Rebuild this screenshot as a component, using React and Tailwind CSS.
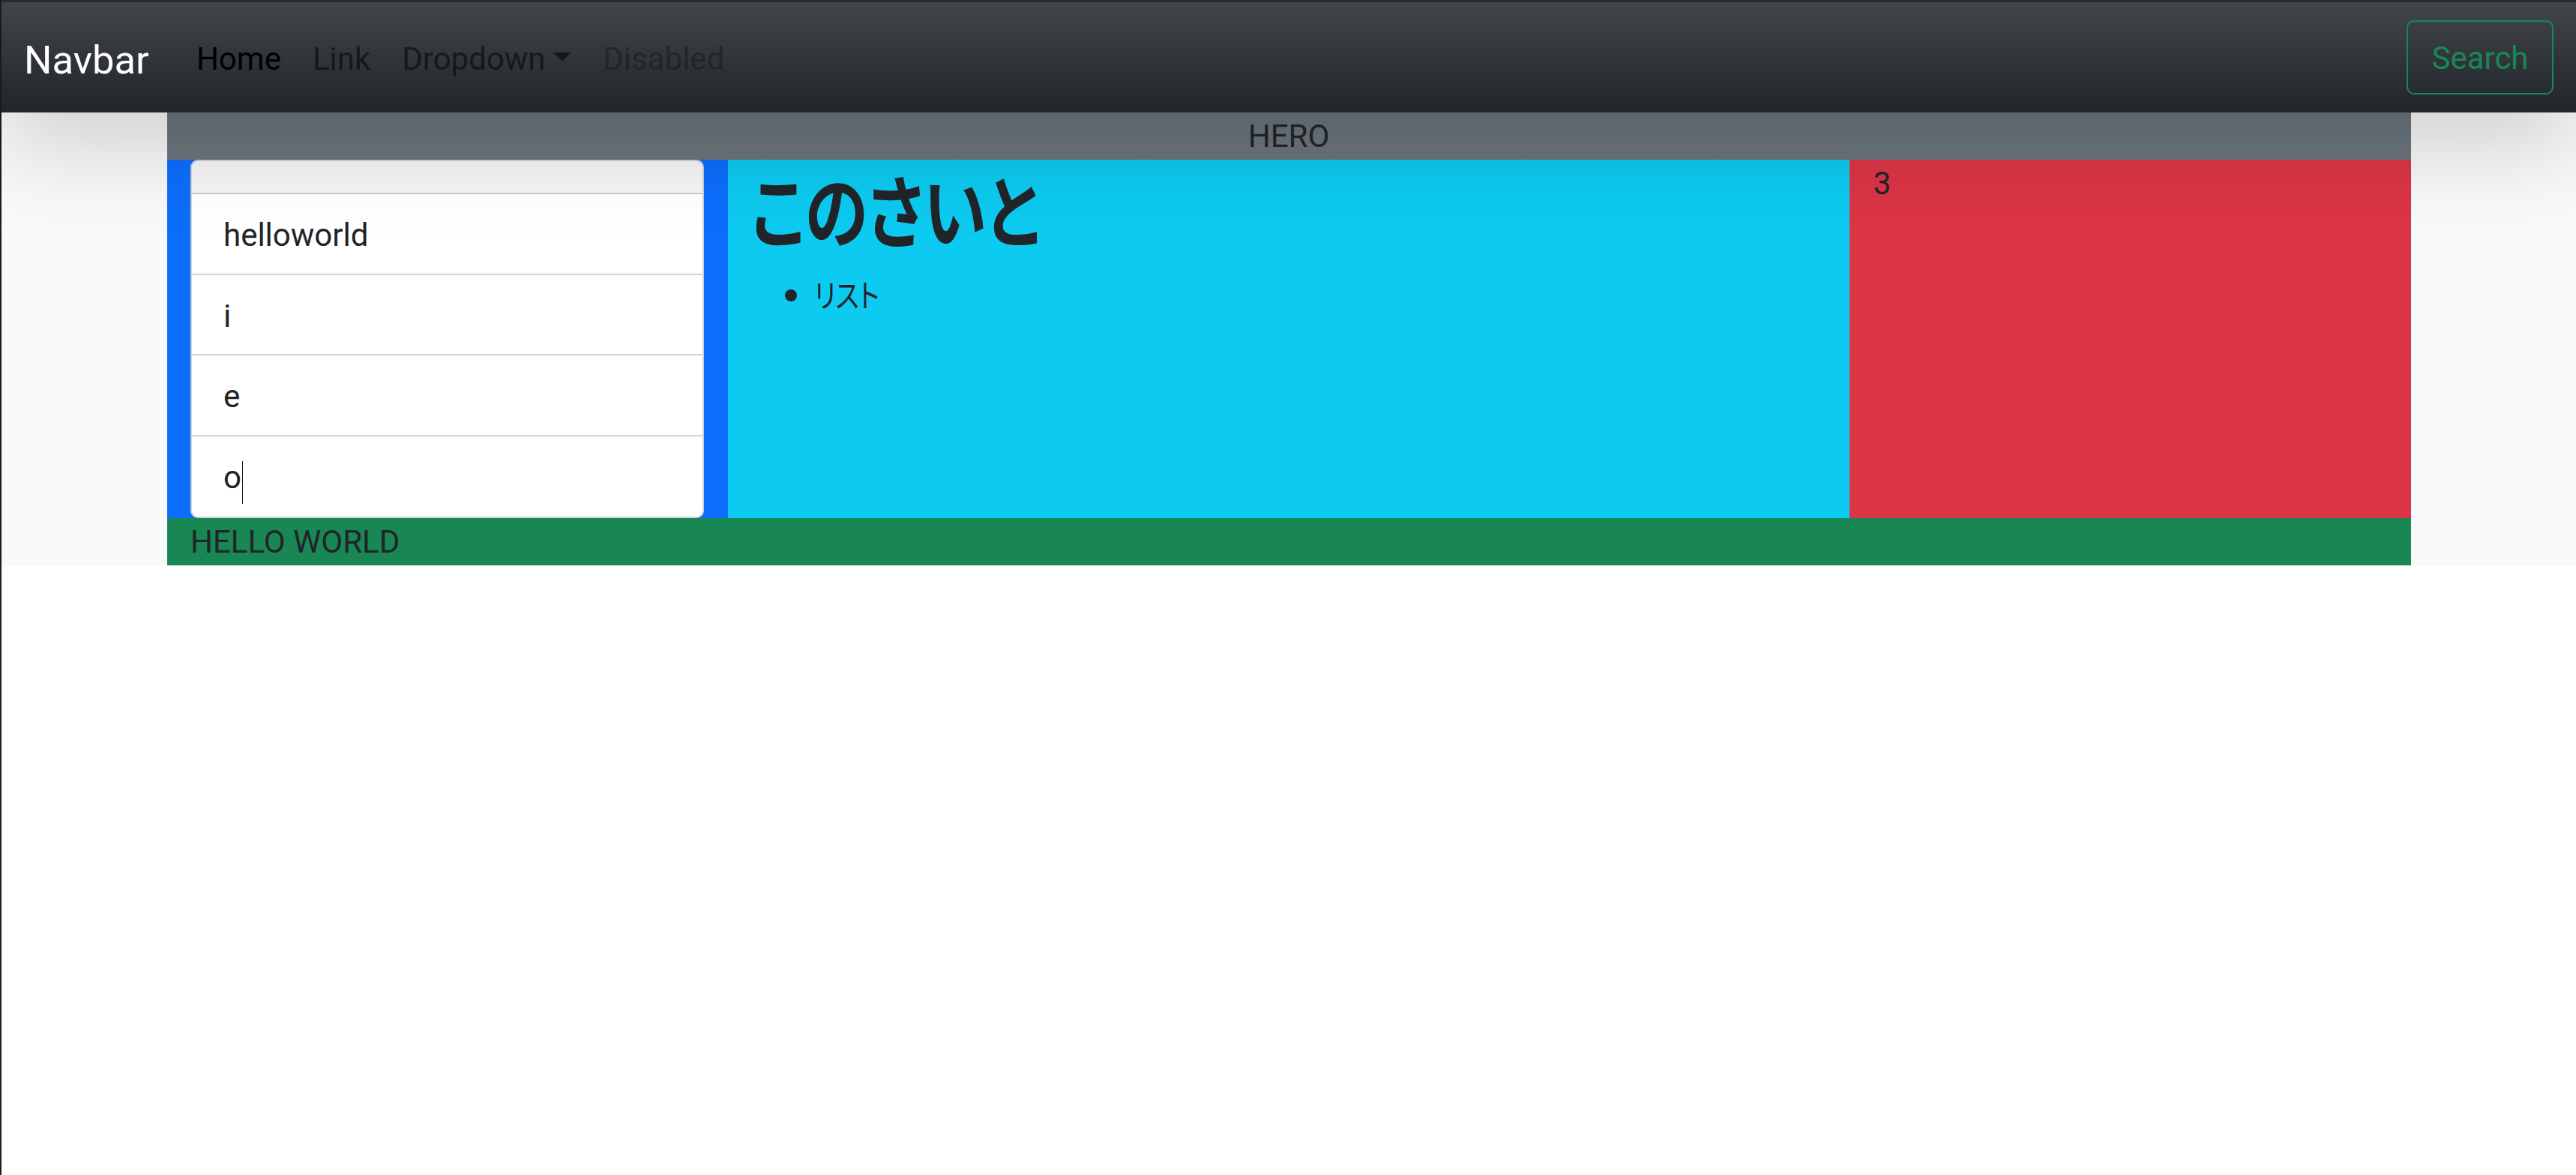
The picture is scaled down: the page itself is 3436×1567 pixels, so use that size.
import React from "react";

export default function App() {
  const items = ["helloworld", "i", "e", "o"];
  return (
    <div className="min-h-screen bg-white border-l-2 border-[#1c1c1c] font-['Roboto','Noto_Sans_CJK_JP',sans-serif] text-[#212529]">
      <header className="relative z-10 shadow-[0_42px_126px_rgba(0,0,0,0.175)]">
        <div className="h-[3px] bg-[#2a2b2d]" />
        <nav className="h-[147px] bg-[#212529] bg-[linear-gradient(180deg,rgba(255,255,255,0.15),rgba(255,255,255,0))] flex items-center pl-[30px] pr-[30px]">
          <a className="text-white text-[52.5px] leading-[78.75px] pt-[7px] mr-[42px]">Navbar</a>
          <ul className="flex items-center text-[42px] leading-[63px] pt-[4px]">
            <li className="px-[21px] text-black">Home</li>
            <li className="px-[21px] text-black/55">Link</li>
            <li className="px-[21px] text-black/55">
              Dropdown
              <span className="inline-block w-0 h-0 ml-[10.7px] align-[0.255em] border-t-[12.6px] border-x-[12.6px] border-x-transparent border-t-current" />
            </li>
            <li className="px-[21px] text-black/30">Disabled</li>
          </ul>
          <button className="ml-auto border-2 border-[#198754] text-[#198754] rounded-[10px] px-[31.5px] pt-[17px] pb-[14.5px] text-[42px] leading-[63px] font-['Roboto',sans-serif]">
            Search
          </button>
        </nav>
      </header>

      <div className="bg-[#f8f9fa]">
        <div className="w-[2993px] mx-auto">
          <div className="h-[63px] bg-[#6c757d] text-center text-[42px] leading-[63px]">HERO</div>
          <div className="grid grid-cols-[1fr_2fr_1fr]">
            <div className="bg-[#0d6efd] px-[31.5px]">
              <div className="bg-white border-2 border-black/[0.175] rounded-[10px] overflow-hidden">
                <div className="h-[44px] bg-black/[0.03] border-b-2 border-black/[0.175]" />
                {items.map((t, i) => (
                  <div
                    key={i}
                    className={
                      i < items.length - 1
                        ? "px-[42px] pt-[23px] pb-[19.5px] text-[42px] leading-[63px] border-b-2 border-black/[0.175]"
                        : "px-[42px] pt-[23px] pb-[17.5px] text-[42px] leading-[63px]"
                    }
                  >
                    {t}
                    {i === items.length - 1 && (
                      <span className="inline-block w-px h-[57px] bg-[#111] ml-[1px] align-[-21px]" />
                    )}
                  </div>
                ))}
              </div>
            </div>
            <div className="bg-[#0dcaf0] px-[31.5px]">
              <h1 className="font-['Noto_Sans_CJK_JP',sans-serif] [font-feature-settings:'palt'] text-[105px] leading-[126px] font-bold mb-[21px]">
                <span className="inline-block origin-left scale-x-[0.81]">このさいと</span>
              </h1>
              <ul className="list-disc pl-[84px] text-[42px] leading-[63px] font-['Noto_Sans_CJK_JP',sans-serif] [font-feature-settings:'palt']">
                <li>
                  <span className="inline-block origin-left scale-x-[0.83]">リスト</span>
                </li>
              </ul>
            </div>
            <div className="bg-[#dc3545] px-[31.5px] text-[42px] leading-[63px]">3</div>
          </div>
          <div className="h-[63px] bg-[#198754] px-[31.5px] text-[42px] leading-[63px]">HELLO WORLD</div>
        </div>
      </div>
    </div>
  );
}
